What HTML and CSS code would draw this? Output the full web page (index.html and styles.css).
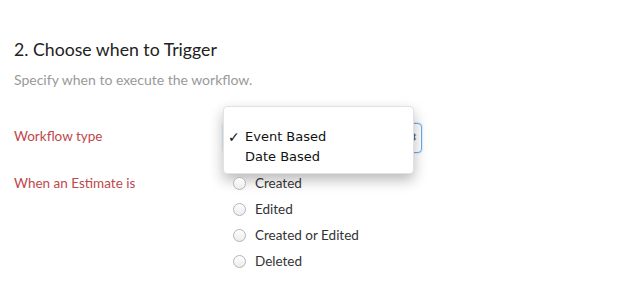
FILE: index.html
```html
<!DOCTYPE html>
<html lang="en">
<head>
    <meta charset="UTF-8">
    <title>Workflow trigger</title>
    <link rel="stylesheet" href="styles.css">
</head>
<body>
    <div class="section">
        <h2>2. Choose when to Trigger</h2>
        <p class="hint">Specify when to execute the workflow.</p>

        <div class="row row-type">
            <label class="field-label">Workflow type</label>
            <div class="field">
                <div class="select-box">
                    <span class="arrows">&#x2B0D;</span>
                </div>
                <!-- open native menu -->
                <ul class="menu">
                    <li class="checked">Event Based</li>
                    <li>Date Based</li>
                </ul>
            </div>
        </div>

        <div class="row">
            <label class="field-label label-radios">When an Estimate is</label>
            <div class="field radios">
                <label class="radio"><span class="dot"></span>Created</label>
                <label class="radio"><span class="dot"></span>Edited</label>
                <label class="radio"><span class="dot"></span>Created or Edited</label>
                <label class="radio"><span class="dot"></span>Deleted</label>
            </div>
        </div>
    </div>
</body>
</html>
```

FILE: styles.css
```css
body {
    margin: 0;
    padding: 0;
    background: #fff;
    font-family: 'Lato', sans-serif;
}

.section {
    padding: 40px 0 0 14px;
}

h2 {
    margin: 0;
    font-size: 17.7px;
    font-weight: normal;
    color: #222;
    line-height: 20px;
}

.hint {
    margin: 12px 0 0 0;
    font-size: 14px;
    color: #999;
    line-height: 16px;
}

.row {
    display: flex;
}

.row-type {
    margin-top: 35px;
    height: 47px;
}

.field-label {
    width: 209px;
    font-size: 13.5px;
    color: #c0474b;
    line-height: 18px;
    padding-top: 4px;
}

.label-radios {
    padding-top: 4px;
}

.field {
    position: relative;
}

.select-box {
    width: 197px;
    height: 28px;
    border: 1px solid #6aa9ec;
    border-radius: 4px;
    box-shadow: 0 0 2px #9cc8f4;
    position: relative;
}

.arrows {
    position: absolute;
    right: 3px;
    top: 6px;
    font-size: 11px;
    color: #666;
}

.menu {
    position: absolute;
    left: 0;
    top: -17px;
    width: 189px;
    margin: 0;
    padding: 20px 0 6px 0;
    list-style: none;
    background: #fff;
    border: 1px solid #e2e2e2;
    border-radius: 4px;
    box-shadow: 0 6px 14px rgba(0, 0, 0, 0.28);
    font-family: 'DejaVu Sans', sans-serif;
    font-size: 13px;
    color: #111;
}

.menu li {
    padding-left: 21px;
    line-height: 20px;
    position: relative;
}

.menu li.checked::before {
    content: "\2713";
    position: absolute;
    left: 4px;
    font-size: 14px;
    font-weight: bold;
}

.radios {
    display: flex;
    flex-direction: column;
    padding-left: 10px;
}

.radio {
    display: flex;
    align-items: center;
    height: 26px;
    font-size: 13.5px;
    color: #333;
}

.dot {
    width: 11px;
    height: 11px;
    border: 1px solid #b5b5b5;
    border-radius: 50%;
    background: linear-gradient(#fff, #ececec);
    margin-right: 9px;
}
```
